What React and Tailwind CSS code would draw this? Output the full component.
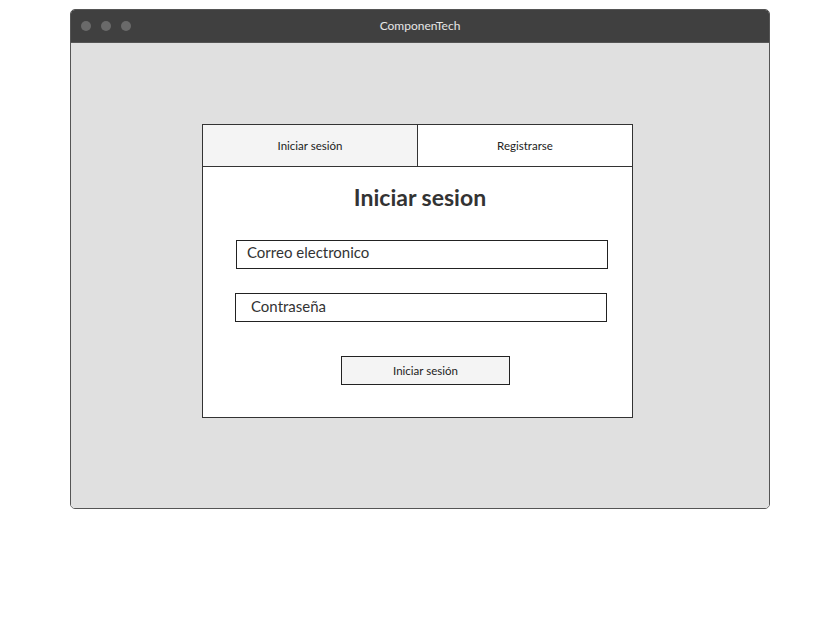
import React from 'react';

function WindowFrame({ title, children }) {
  return (
    <div className="w-[700px] ml-[70px] mt-[9px] rounded-[5px] border border-[#555] overflow-hidden">
      {/* barra de titulo */}
      <div className="relative h-[32px] bg-[#404040] flex items-center justify-center">
        <div className="absolute left-[10px] top-[11px] flex gap-[10px]">
          <span className="w-[10px] h-[10px] rounded-full bg-[#6a6a6a]" />
          <span className="w-[10px] h-[10px] rounded-full bg-[#6a6a6a]" />
          <span className="w-[10px] h-[10px] rounded-full bg-[#6a6a6a]" />
        </div>
        <span className="text-[12px] text-[#e6e6e6]">{title}</span>
      </div>
      <div className="h-[466px] bg-[#e0e0e0] border-t border-[#555]">{children}</div>
    </div>
  );
}

export default function App() {
  return (
    <div className="min-h-[619px] bg-white overflow-hidden" style={{ fontFamily: "'Source Sans Pro', Lato, 'Open Sans', sans-serif" }}>
      <WindowFrame title="ComponenTech">
        <div className="ml-[131px] mt-[81px] w-[431px] h-[294px] bg-white border border-[#333] flex flex-col">
          {/* pestañas */}
          <div className="flex h-[42px] border-b border-[#333]">
            <button className="w-[215px] bg-[#f4f4f4] border-r border-[#333] text-[11.5px] text-[#222]">
              Iniciar sesión
            </button>
            <button className="flex-1 bg-white text-[11.5px] text-[#222]">Registrarse</button>
          </div>
          <h1 className="mt-[16px] text-center pl-[5px] text-[23px] font-bold text-[#333] leading-[28px]">
            Iniciar sesion
          </h1>
          <div className="ml-[33px] mt-[29px] w-[372px] h-[29px] border border-[#222] flex items-center pl-[10px] pb-[4px] text-[15px] text-[#333]">
            Correo electronico
          </div>
          <div className="ml-[32px] mt-[24px] w-[372px] h-[29px] border border-[#222] flex items-center pl-[15px] pb-[2px] text-[15px] text-[#333]">
            Contraseña
          </div>
          <button className="ml-[138px] mt-[34px] w-[169px] h-[29px] bg-[#f4f4f4] border border-[#222] text-[11.5px] text-[#222]">
            Iniciar sesión
          </button>
        </div>
      </WindowFrame>
    </div>
  );
}
